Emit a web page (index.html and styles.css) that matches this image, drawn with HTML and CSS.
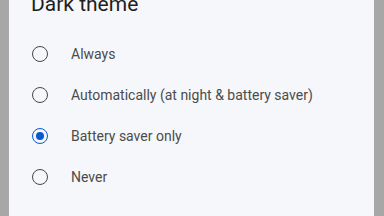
FILE: index.html
```html
<!DOCTYPE html>
<html>
<head>
<meta charset="utf-8">
<link rel="stylesheet" href="styles.css">
</head>
<body>
<div class="dialog">
  <h1 class="title">Dark theme</h1>
  <ul class="options">
    <li class="option"><span class="radio"></span><span class="label">Always</span></li>
    <li class="option"><span class="radio"></span><span class="label">Automatically (at night &amp; battery saver)</span></li>
    <li class="option"><span class="radio checked"></span><span class="label">Battery saver only</span></li>
    <li class="option"><span class="radio"></span><span class="label">Never</span></li>
  </ul>
</div>
</body>
</html>
```
FILE: styles.css
```css
html, body {
  margin: 0;
  padding: 0;
  height: 216px;
  overflow: hidden;
  background: #a7a7a7;
  font-family: Roboto, "Noto Sans", Arial, sans-serif;
}
.dialog {
  margin-left: 9px;
  width: 365px;
  height: 216px;
  background: #f6f7fb;
  padding: 0 0 0 22px;
  box-sizing: border-box;
  overflow: hidden;
}
.title {
  margin: -10px 0 0 0;
  font-size: 21px;
  line-height: 28px;
  font-weight: 400;
  color: #1f1f1f;
}
.options {
  list-style: none;
  margin: 15px 0 0 0;
  padding: 0;
}
.option {
  display: flex;
  align-items: center;
  height: 41px;
}
.radio {
  width: 16px;
  height: 16px;
  box-sizing: border-box;
  border: 1.8px solid #444746;
  border-radius: 50%;
  margin-left: 1px;
  margin-right: 23px;
  display: flex;
  align-items: center;
  justify-content: center;
  flex: none;
}
.radio.checked {
  border-color: #0b57d0;
}
.radio.checked::after {
  content: "";
  width: 8px;
  height: 8px;
  border-radius: 50%;
  background: #0b57d0;
}
.label {
  font-size: 14px;
  color: #4a4c4b;
  letter-spacing: 0;
}
```
